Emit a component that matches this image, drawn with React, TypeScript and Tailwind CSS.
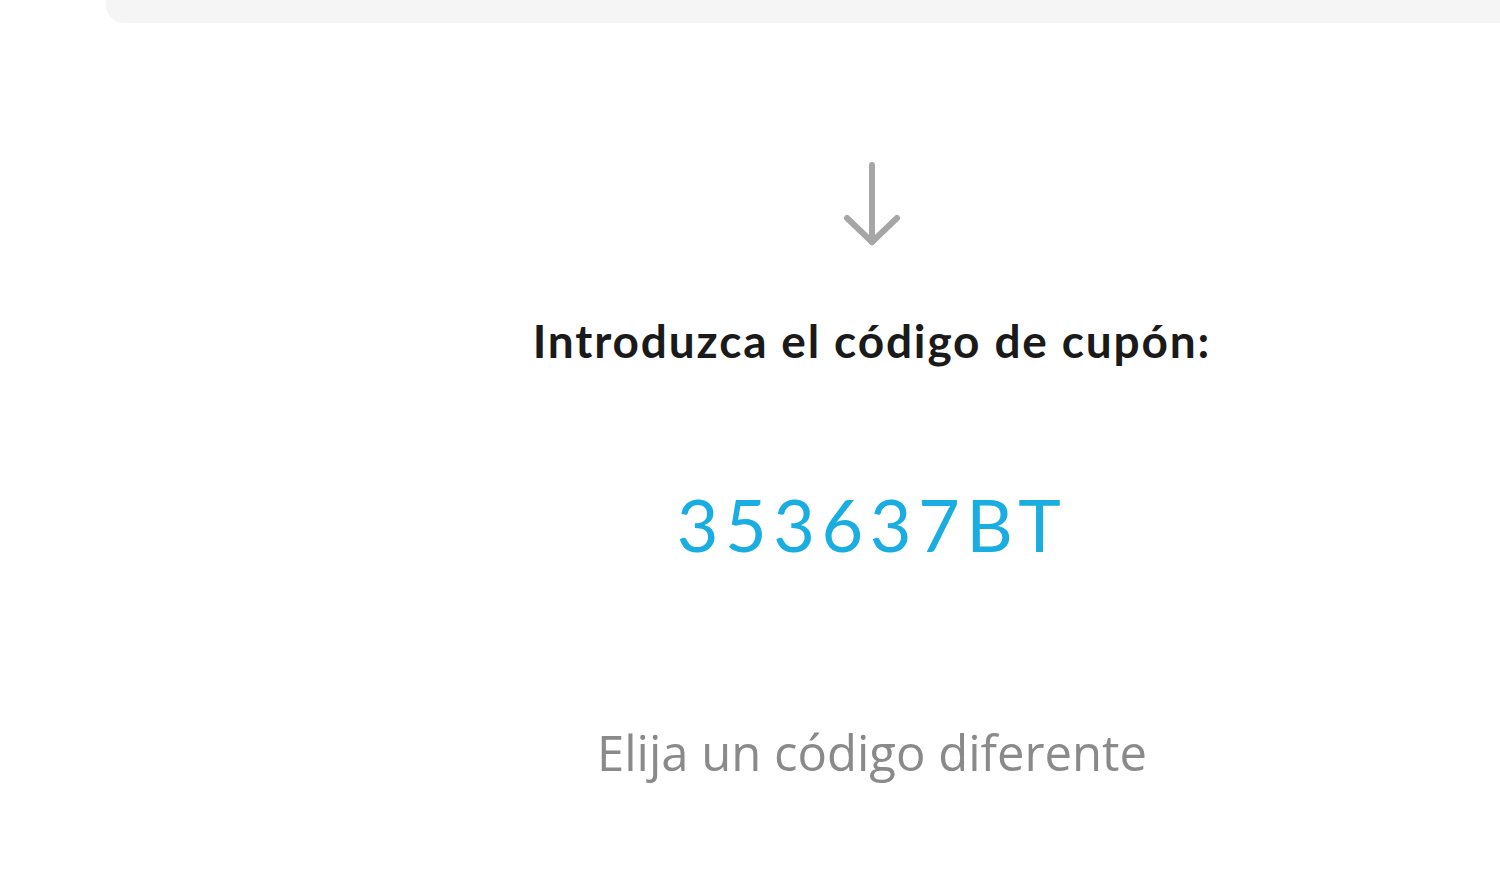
export default function App() {
  return (
    <div className="min-h-[890px] w-full bg-white overflow-hidden">
      <div className="ml-[106px] h-[23px] bg-[#f5f5f5] rounded-bl-[18px]" />
      <div className="pl-[244px] flex flex-col items-center">
        <svg
          className="mt-[138px]"
          width="60"
          height="88"
          viewBox="0 0 60 88"
          fill="none"
          stroke="#a6a6a6"
          strokeWidth="6"
          strokeLinecap="round"
          strokeLinejoin="round"
        >
          <path d="M30 4 V81" />
          <path d="M5 57 L30 81 L55 57" />
        </svg>
        <h2 className="mt-[64px] text-[46px] leading-[56px] font-bold tracking-[0.04em] text-[#1a1a1a] font-['Lato',sans-serif]">
          Introduzca el código de cupón:
        </h2>
        <div className="mt-[115px] text-[72px] leading-[80px] tracking-[0.09em] text-[#19ade2] font-['Lato',sans-serif]">
          353637BT
        </div>
        <button className="mt-[158px] text-[49px] leading-[60px] text-[#8a8a8a] font-['Open_Sans',sans-serif]">
          Elija un código diferente
        </button>
      </div>
    </div>
  );
}
